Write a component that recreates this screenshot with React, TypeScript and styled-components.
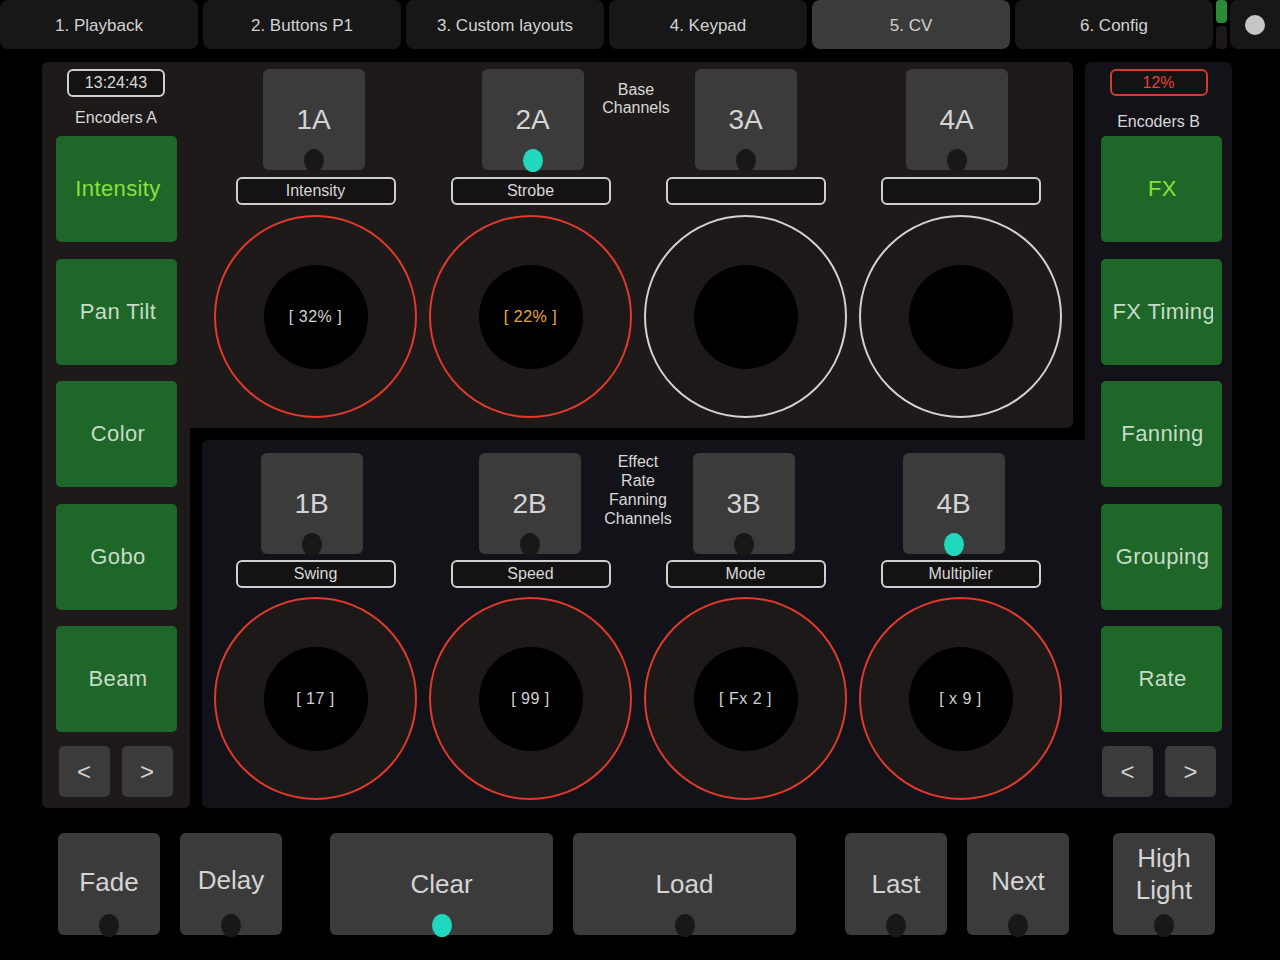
import React from "react";
import styled, { createGlobalStyle } from "styled-components";

const GlobalStyle = createGlobalStyle`
  html, body {
    margin: 0;
    padding: 0;
    background: #000;
  }
  body {
    font-family: "Liberation Sans", Arial, sans-serif;
    color: #d6d6d6;
  }
`;

const Screen = styled.div`
  width: 1280px;
  height: 960px;
  background: #000;
  overflow: hidden;
  display: flex;
  flex-direction: column;
`;

/* ---------- tabs ---------- */

const TabBar = styled.nav`
  display: flex;
  height: 49px;
  gap: 5px;
`;

const Tab = styled.div<{ $active?: boolean }>`
  flex: none;
  width: 198px;
  padding-top: 2px;
  box-sizing: border-box;
  border-radius: 8px;
  background: ${(p) => (p.$active ? "#3b3b3b" : "#171717")};
  display: flex;
  align-items: center;
  justify-content: center;
  font-size: 17px;
  color: #d2d2d2;
`;

const Status = styled.div`
  flex: none;
  width: 11px;
  margin-left: -2px;
  display: flex;
  flex-direction: column;
  gap: 3px;
`;

const StatusBar = styled.span<{ $on?: boolean }>`
  flex: 1;
  border-radius: 4px;
  background: ${(p) => (p.$on ? "#2a8a36" : "#1c1818")};
`;

const MenuButton = styled.div`
  flex: none;
  width: 50px;
  margin-left: -2px;
  border-radius: 8px 0 0 8px;
  background: #171717;
  display: flex;
  align-items: center;
  justify-content: center;
`;

const MenuDot = styled.span`
  width: 20px;
  height: 20px;
  border-radius: 50%;
  background: #c6c6c6;
`;

/* ---------- workspace ---------- */

const Workspace = styled.div`
  display: flex;
  height: 746px;
  margin: 13px 0 0 42px;
`;

const SidePanel = styled.aside<{ $side: "left" | "right" }>`
  flex: none;
  width: ${(p) => (p.$side === "left" ? 148 : 147)}px;
  box-sizing: border-box;
  padding: 7px 0 11px;
  background: ${(p) => (p.$side === "left" ? "#1e1a1a" : "#121218")};
  border-radius: ${(p) => (p.$side === "left" ? "6px 0 6px 6px" : "6px 6px 6px 0")};
  display: flex;
  flex-direction: column;
  align-items: center;
`;

const ReadoutBox = styled.div<{ $alert?: boolean }>`
  width: 98px;
  height: 28px;
  box-sizing: border-box;
  border: 2px solid ${(p) => (p.$alert ? "#d23b31" : "#cfcfcf")};
  border-radius: 6px;
  background: #141212;
  display: flex;
  align-items: center;
  justify-content: center;
  font-size: 16px;
  color: ${(p) => (p.$alert ? "#e2443a" : "#d8d8d8")};
`;

const SideTitle = styled.div<{ $offset: number }>`
  margin-top: ${(p) => p.$offset}px;
  height: 20px;
  line-height: 20px;
  font-size: 16px;
  color: #d8d8d8;
`;

const PageStack = styled.div<{ $offset: number; $shift: number }>`
  margin-top: ${(p) => p.$offset}px;
  margin-left: ${(p) => p.$shift}px;
  display: flex;
  flex-direction: column;
  gap: 16.5px;
`;

const PageButton = styled.div<{ $active?: boolean }>`
  width: 121px;
  height: 106px;
  box-sizing: border-box;
  padding: 0 9px 0 12px;
  border-radius: 5px;
  background: #1f6629;
  display: flex;
  align-items: center;
  justify-content: center;
  overflow: hidden;
  font-size: 22px;
  letter-spacing: 0.4px;
  color: ${(p) => (p.$active ? "#86e23c" : "#c6dcc6")};
`;

const PageLabel = styled.span`
  display: block;
  max-width: 100%;
  overflow: hidden;
  white-space: nowrap;
  text-align: left;
`;

const NavRow = styled.div<{ $shift: number }>`
  margin-top: 14px;
  margin-left: ${(p) => p.$shift}px;
  display: flex;
  gap: 12px;
`;

const NavButton = styled.div`
  width: 51px;
  height: 51px;
  border-radius: 5px;
  background: #3b3b3b;
  display: flex;
  align-items: center;
  justify-content: center;
  font-size: 24px;
  color: #d2d2d2;
`;

const Center = styled.div`
  flex: none;
  width: 895px;
  display: flex;
  flex-direction: column;
`;

const EncoderPanel = styled.section<{ $tone: "warm" | "cool" }>`
  position: relative;
  box-sizing: border-box;
  display: flex;
  ${(p) =>
    p.$tone === "warm"
      ? `
    height: 366px;
    margin-right: 12px;
    padding: 7px 0 0 18px;
    background: #1e1a1a;
    border-radius: 0 6px 6px 0;
  `
      : `
    height: 368px;
    margin: 12px 0 0 12px;
    padding: 13px 0 0 6px;
    background: #121218;
    border-radius: 6px 0 0 6px;
  `}
`;

const PanelCaption = styled.div<{ $x: number; $top: number; $lh: number }>`
  position: absolute;
  left: ${(p) => p.$x}px;
  top: ${(p) => p.$top}px;
  transform: translateX(-50%);
  text-align: center;
  font-size: 16px;
  line-height: ${(p) => p.$lh}px;
  color: #d8d8d8;
  white-space: pre;
`;

const EncoderColumn = styled.div`
  flex: none;
  width: 215px;
  display: flex;
  flex-direction: column;
  align-items: center;
`;

const ChannelButton = styled.div<{ $nudge: number }>`
  position: relative;
  width: 102px;
  height: 101px;
  margin-left: ${(p) => Math.max(0, p.$nudge * 2)}px;
  margin-right: ${(p) => Math.max(0, -p.$nudge * 2)}px;
  border-radius: 6px;
  background: #3b3b3b;
  display: flex;
  align-items: center;
  justify-content: center;
  font-size: 28px;
  color: #d4d4d4;
`;

const Led = styled.span<{ $on?: boolean }>`
  position: absolute;
  left: 50%;
  bottom: -2px;
  width: 20px;
  height: 23px;
  margin-left: -10px;
  border-radius: 50%;
  background: ${(p) => (p.$on ? "#1fd8bd" : "#1a1719")};
`;

const ParamLabel = styled.div<{ $gap: number }>`
  margin-top: ${(p) => p.$gap}px;
  width: 160px;
  height: 28px;
  box-sizing: border-box;
  border: 2px solid #cfcfcf;
  border-radius: 6px;
  background: #141212;
  display: flex;
  align-items: center;
  justify-content: center;
  font-size: 16px;
  color: #d8d8d8;
`;

const Knob = styled.div<{ $gap: number; $live: boolean }>`
  margin-top: ${(p) => p.$gap}px;
  width: 203px;
  height: 203px;
  box-sizing: border-box;
  border-radius: 50%;
  border: 2px solid ${(p) => (p.$live ? "#e2392d" : "#d2d2d2")};
  background: #1d1919;
  display: flex;
  align-items: center;
  justify-content: center;
`;

const KnobCore = styled.div<{ $accent?: boolean }>`
  width: 104px;
  height: 104px;
  border-radius: 50%;
  background: #000;
  display: flex;
  align-items: center;
  justify-content: center;
  font-size: 16px;
  letter-spacing: 0.5px;
  color: ${(p) => (p.$accent ? "#e9a93a" : "#d2d2d2")};
`;

/* ---------- bottom row ---------- */

const ActionRow = styled.div`
  display: flex;
  margin: 25px 0 0 58px;
`;

const ActionGroup = styled.div<{ $space?: number }>`
  display: flex;
  gap: 20px;
  margin-left: ${(p) => p.$space ?? 0}px;
`;

const ActionButton = styled.div<{ $wide?: boolean; $lift?: number }>`
  position: relative;
  width: ${(p) => (p.$wide ? 223 : 102)}px;
  height: 102px;
  box-sizing: border-box;
  padding-bottom: ${(p) => p.$lift ?? 0}px;
  border-radius: 6px;
  background: #3b3b3b;
  display: flex;
  align-items: center;
  justify-content: center;
  text-align: center;
  font-size: 26px;
  line-height: 32px;
  color: #d4d4d4;
`;

type Encoder = {
  id: string;
  label: string;
  value?: string;
  accent?: boolean;
  led?: boolean;
  nudge: number;
};

const bankA: Encoder[] = [
  { id: "1A", label: "Intensity", value: "[ 32% ]", nudge: -2 },
  { id: "2A", label: "Strobe", value: "[ 22% ]", accent: true, led: true, nudge: 2 },
  { id: "3A", label: "", nudge: 0 },
  { id: "4A", label: "", nudge: -4 },
];

const bankB: Encoder[] = [
  { id: "1B", label: "Swing", value: "[ 17 ]", nudge: -4 },
  { id: "2B", label: "Speed", value: "[ 99 ]", nudge: -1 },
  { id: "3B", label: "Mode", value: "[ Fx 2 ]", nudge: -2 },
  { id: "4B", label: "Multiplier", value: "[ x 9 ]", led: true, nudge: -7 },
];

const tabs = ["1. Playback", "2. Buttons P1", "3. Custom layouts", "4. Keypad", "5. CV", "6. Config"];

const EncoderBank: React.FC<{ items: Encoder[]; tight?: boolean }> = ({ items, tight }) => (
  <>
    {items.map((e) => (
      <EncoderColumn key={e.id}>
        <ChannelButton $nudge={e.nudge}>
          {e.id}
          <Led $on={e.led} />
        </ChannelButton>
        <ParamLabel $gap={tight ? 6 : 7}>{e.label}</ParamLabel>
        <Knob $gap={tight ? 9 : 10} $live={!!e.value}>
          <KnobCore $accent={e.accent}>{e.value}</KnobCore>
        </Knob>
      </EncoderColumn>
    ))}
  </>
);

const App: React.FC = () => {
  return (
    <Screen>
      <GlobalStyle />
      <TabBar>
        {tabs.map((t) => (
          <Tab key={t} $active={t === "5. CV"}>
            {t}
          </Tab>
        ))}
        <Status>
          <StatusBar $on />
          <StatusBar />
        </Status>
        <MenuButton>
          <MenuDot />
        </MenuButton>
      </TabBar>

      <Workspace>
        <SidePanel $side="left">
          <ReadoutBox>13:24:43</ReadoutBox>
          <SideTitle $offset={11}>Encoders A</SideTitle>
          <PageStack $offset={8} $shift={1}>
            <PageButton $active><PageLabel>Intensity</PageLabel></PageButton>
            <PageButton><PageLabel>Pan Tilt</PageLabel></PageButton>
            <PageButton><PageLabel>Color</PageLabel></PageButton>
            <PageButton><PageLabel>Gobo</PageLabel></PageButton>
            <PageButton><PageLabel>Beam</PageLabel></PageButton>
          </PageStack>
          <NavRow $shift={-1}>
            <NavButton>&lt;</NavButton>
            <NavButton>&gt;</NavButton>
          </NavRow>
        </SidePanel>

        <Center>
          <EncoderPanel $tone="warm">
            <PanelCaption $x={446} $top={19} $lh={18}>{"Base\nChannels"}</PanelCaption>
            <EncoderBank items={bankA} />
          </EncoderPanel>
          <EncoderPanel $tone="cool">
            <PanelCaption $x={436} $top={12} $lh={19}>
              {"Effect\nRate\nFanning\nChannels"}
            </PanelCaption>
            <EncoderBank items={bankB} tight />
          </EncoderPanel>
        </Center>

        <SidePanel $side="right">
          <ReadoutBox $alert>12%</ReadoutBox>
          <SideTitle $offset={16}>Encoders B</SideTitle>
          <PageStack $offset={4} $shift={5}>
            <PageButton $active><PageLabel>FX</PageLabel></PageButton>
            <PageButton><PageLabel>FX Timing</PageLabel></PageButton>
            <PageButton><PageLabel>Fanning</PageLabel></PageButton>
            <PageButton><PageLabel>Grouping</PageLabel></PageButton>
            <PageButton><PageLabel>Rate</PageLabel></PageButton>
          </PageStack>
          <NavRow $shift={1}>
            <NavButton>&lt;</NavButton>
            <NavButton>&gt;</NavButton>
          </NavRow>
        </SidePanel>
      </Workspace>

      <ActionRow>
        <ActionGroup>
          <ActionButton $lift={4}>Fade<Led /></ActionButton>
          <ActionButton $lift={8}>Delay<Led /></ActionButton>
        </ActionGroup>
        <ActionGroup $space={48}>
          <ActionButton $wide>Clear<Led $on /></ActionButton>
          <ActionButton $wide>Load<Led /></ActionButton>
        </ActionGroup>
        <ActionGroup $space={49}>
          <ActionButton>Last<Led /></ActionButton>
          <ActionButton $lift={6}>Next<Led /></ActionButton>
        </ActionGroup>
        <ActionGroup $space={44}>
          <ActionButton $lift={20}>
            High
            <br />
            Light
            <Led />
          </ActionButton>
        </ActionGroup>
      </ActionRow>
    </Screen>
  );
};

export default App;
